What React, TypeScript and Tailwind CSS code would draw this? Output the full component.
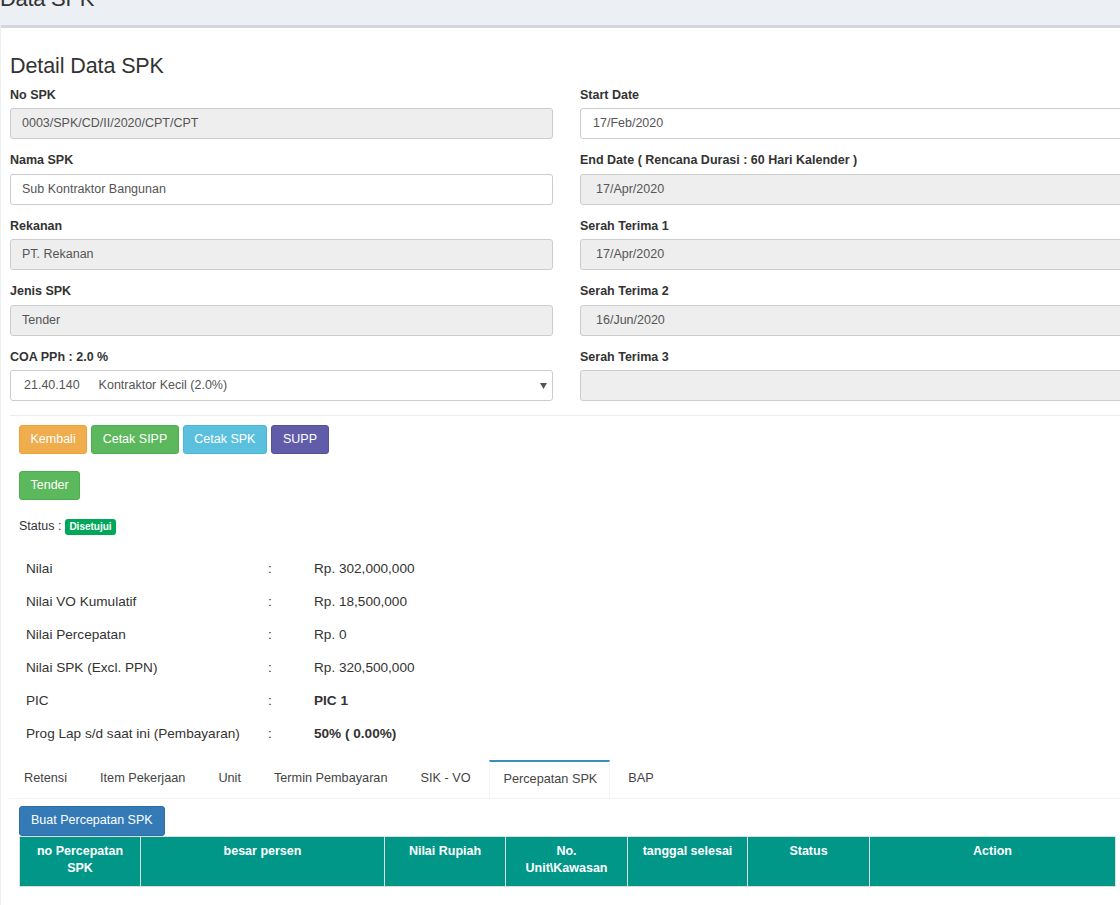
import React from "react";

const leftFields: { label: string; value: string; disabled: boolean }[] = [
  { label: "No SPK", value: "0003/SPK/CD/II/2020/CPT/CPT", disabled: true },
  { label: "Nama SPK", value: "Sub Kontraktor Bangunan", disabled: false },
  { label: "Rekanan", value: "PT. Rekanan", disabled: true },
  { label: "Jenis SPK", value: "Tender", disabled: true },
];

const rightFields: { label: string; value: string; disabled: boolean }[] = [
  { label: "Start Date", value: "17/Feb/2020", disabled: false },
  { label: "End Date ( Rencana Durasi : 60 Hari Kalender )", value: "17/Apr/2020", disabled: true },
  { label: "Serah Terima 1", value: "17/Apr/2020", disabled: true },
  { label: "Serah Terima 2", value: "16/Jun/2020", disabled: true },
  { label: "Serah Terima 3", value: "", disabled: true },
];

const info: { label: string; value: string; bold?: boolean }[] = [
  { label: "Nilai", value: "Rp. 302,000,000" },
  { label: "Nilai VO Kumulatif", value: "Rp. 18,500,000" },
  { label: "Nilai Percepatan", value: "Rp. 0" },
  { label: "Nilai SPK (Excl. PPN)", value: "Rp. 320,500,000" },
  { label: "PIC", value: "PIC 1", bold: true },
  { label: "Prog Lap s/d saat ini (Pembayaran)", value: "50% ( 0.00%)", bold: true },
];

const tabs = ["Retensi", "Item Pekerjaan", "Unit", "Termin Pembayaran", "SIK - VO", "Percepatan SPK", "BAP"];

const cols: { title: string; w: string }[] = [
  { title: "no Percepatan SPK", w: "w-[121px]" },
  { title: "besar persen", w: "w-[244px]" },
  { title: "Nilai Rupiah", w: "w-[121px]" },
  { title: "No. Unit\\Kawasan", w: "w-[122px]" },
  { title: "tanggal selesai", w: "w-[120px]" },
  { title: "Status", w: "w-[122px]" },
  { title: "Action", w: "w-[246px]" },
];

function Label({ children }: { children: React.ReactNode }) {
  return (
    <div className="text-[12.5px] font-bold leading-[17px] mb-[4.5px] text-[#333] whitespace-nowrap">
      {children}
    </div>
  );
}

function Field({ label, value, disabled, right }: { label: string; value: string; disabled: boolean; right?: boolean }) {
  return (
    <div className="pb-[13px]">
      <Label>{label}</Label>
      <div
        className={`h-[31px] border border-[#ccc] rounded-[3px] text-[12.5px] text-[#555] flex items-center whitespace-nowrap ${
          disabled ? "bg-[#eee]" : "bg-white"
        } ${right ? (disabled ? "pl-[15px]" : "pl-[12px]") : "pl-[11px]"}`}
      >
        {value}
      </div>
    </div>
  );
}

export default function App() {
  return (
    <div className="w-[1120px] h-[905px] overflow-hidden bg-[#ecf0f5] font-['Liberation_Sans',Arial,sans-serif] text-[#333]">
      <div className="h-[25px] overflow-hidden">
        <h1 className="text-[22px] leading-[22px] mt-[-12px] tracking-[-0.3px] text-[#333] whitespace-nowrap">Data SPK</h1>
      </div>
      <div className="ml-[1px] w-[1119px] h-[880px] bg-white border-t-[3px] border-[#d2d6de] overflow-hidden">
        <div className="pl-[9px] pt-[27px]">
          <h3 className="text-[21.5px] leading-[23px] tracking-[-0.1px] mb-[8.5px] text-[#333] whitespace-nowrap">Detail Data SPK</h3>
          <div className="grid grid-cols-[543px_543px] gap-x-[27px] w-[1113px]">
            <div className="flex flex-col">
              {leftFields.map((f) => (
                <Field key={f.label} {...f} />
              ))}
              <div className="pb-[13px]">
                <Label>COA PPh : 2.0 %</Label>
                <div className="h-[31px] border border-[#ccc] rounded-[3px] bg-white text-[12.5px] text-[#555] flex items-center pl-[13px] pr-[5px] whitespace-nowrap">
                  <span>21.40.140</span>
                  <span className="ml-[19px]">Kontraktor Kecil (2.0%)</span>
                  <svg className="ml-auto" width="7" height="6" viewBox="0 0 7 6">
                    <path d="M0 0 H7 L3.5 6 Z" fill="#555" />
                  </svg>
                </div>
              </div>
            </div>
            <div className="flex flex-col">
              {rightFields.map((f) => (
                <Field key={f.label} {...f} right />
              ))}
            </div>
          </div>
          <div className="mt-[1px] border-t border-[#eeeeee] w-[1120px]" />
          <div className="ml-[9px] mt-[9px] flex gap-[4px]">
            <button className="h-[29px] px-[10.5px] rounded-[3px] border border-[#eea236] bg-[#f0ad4e] text-white text-[12.5px]">Kembali</button>
            <button className="h-[29px] px-[10.5px] rounded-[3px] border border-[#4cae4c] bg-[#5cb85c] text-white text-[12.5px]">Cetak SIPP</button>
            <button className="h-[29px] px-[10.5px] rounded-[3px] border border-[#46b8da] bg-[#5bc0de] text-white text-[12.5px]">Cetak SPK</button>
            <button className="h-[29px] px-[11px] rounded-[3px] border border-[#555299] bg-[#605ca8] text-white text-[12.5px]">SUPP</button>
          </div>
          <div className="ml-[9px] mt-[17px] flex">
            <button className="h-[29px] px-[10.5px] rounded-[3px] border border-[#4cae4c] bg-[#5cb85c] text-white text-[12.5px]">Tender</button>
          </div>
          <div className="ml-[9px] mt-[17px] flex items-center leading-[17px] text-[12.5px] text-[#333]">
            <span>Status :</span>
            <span className="ml-[4px] mt-[2px] bg-[#00a65a] text-white text-[10px] font-bold leading-[16px] px-[4px] rounded-[3px]">Disetujui</span>
          </div>
          <div className="ml-[8px] mt-[17px] text-[13.6px] text-[#333]">
            {info.map((r) => (
              <div key={r.label} className="flex leading-[17px] h-[33px] items-center">
                <div className="w-[242px] pl-[8px] whitespace-nowrap">{r.label}</div>
                <div className="w-[46px] pl-[8px]">:</div>
                <div className={`pl-[8px] whitespace-nowrap ${r.bold ? "font-bold" : ""}`}>{r.value}</div>
              </div>
            ))}
          </div>
          <div className="mt-[9.5px] -ml-[1px] flex h-[39px] border-b border-[#f4f4f4] w-[1120px]">
            {tabs.map((t) => {
              const active = t === "Percepatan SPK";
              return (
                <div
                  key={t}
                  className={`h-full flex items-center mr-[3px] text-[12.7px] text-[#444] whitespace-nowrap ${
                    active
                      ? "pl-[14px] pr-[12px] border-t-2 border-t-[#3c8dbc] border-x border-x-[#f4f4f4] bg-white -mb-[1px] h-[39px]"
                      : "px-[15px]"
                  }`}
                >
                  {t}
                </div>
              );
            })}
          </div>
          <div className="ml-[9px] mt-[7px]">
            <button className="h-[30px] px-[11px] rounded-[3px] border border-[#2e6da4] bg-[#337ab7] text-white text-[12.5px]">
              Buat Percepatan SPK
            </button>
            <table className="table-fixed border-collapse w-[1096px]">
              <thead>
                <tr>
                  {cols.map((c) => (
                    <th
                      key={c.title}
                      className={`${c.w} bg-[#009688] text-white font-bold text-[12.5px] leading-[17px] align-top text-center border border-[#ddd] pt-[6px] pb-[9px] px-[8px]`}
                    >
                      {c.title}
                    </th>
                  ))}
                </tr>
              </thead>
            </table>
          </div>
        </div>
      </div>
    </div>
  );
}
